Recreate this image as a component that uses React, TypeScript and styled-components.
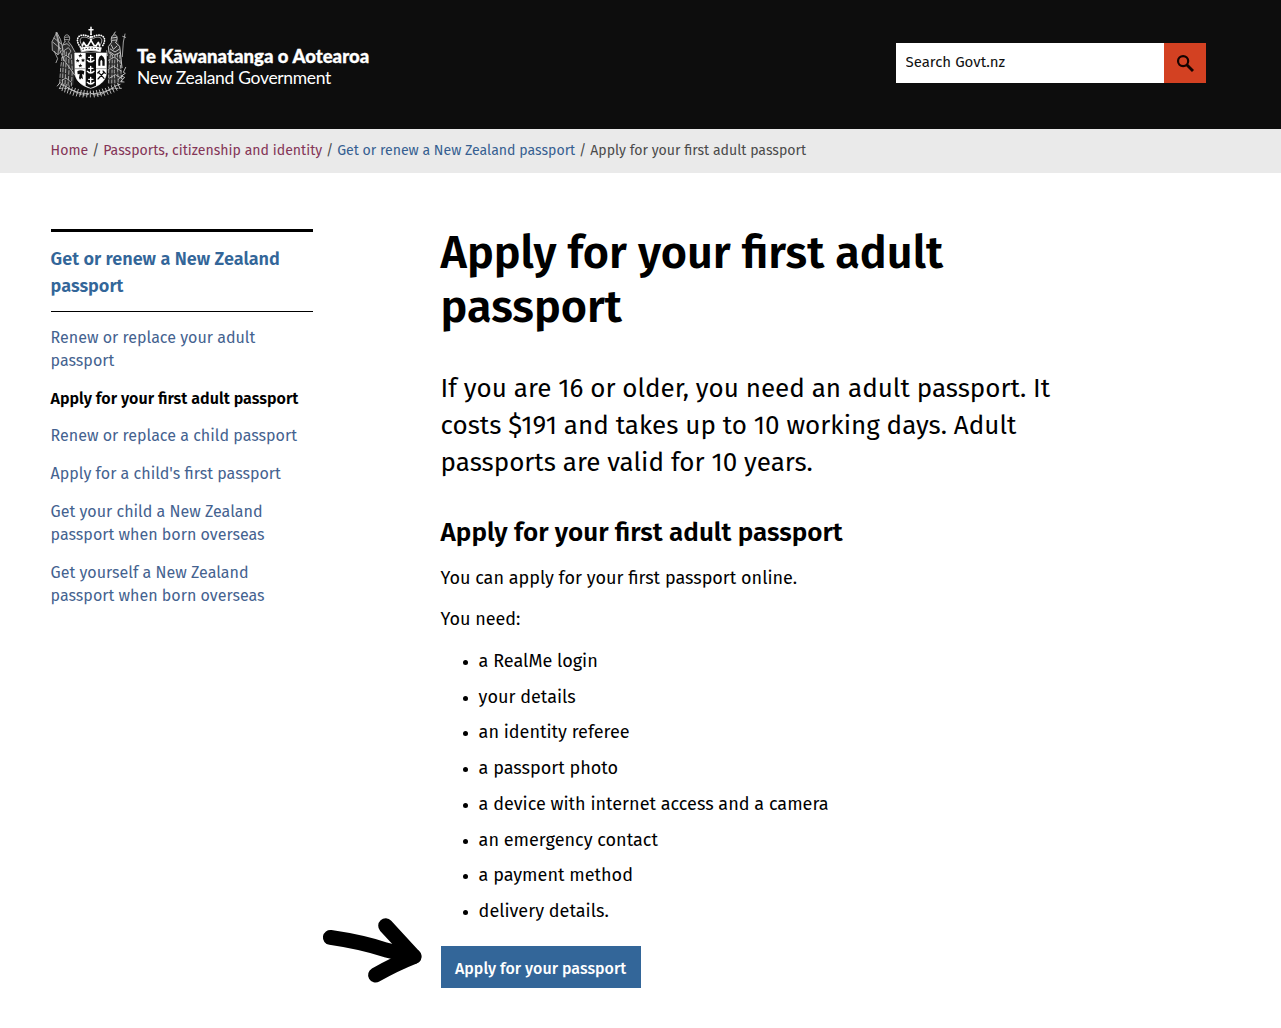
import React from "react";
import styled, { createGlobalStyle } from "styled-components";

const GlobalStyle = createGlobalStyle`
  *, *::before, *::after { box-sizing: border-box; }
  body {
    margin: 0;
    background: #fff;
    color: #000;
    font-family: "Fira Sans", "Noto Sans", "Open Sans", sans-serif;
  }
  a { text-decoration: none; color: inherit; }
  h1, h2, p, ul { margin: 0; padding: 0; }
`;

const Page = styled.div`
  position: relative;
  height: 1028px;
  overflow: hidden;
`;

const Header = styled.header`
  display: flex;
  justify-content: space-between;
  height: 129px;
  padding: 26px 75px 0 51px;
  background: #0d0d0d;
`;

const Brand = styled.a`
  display: flex;
  gap: 10px;
  color: #fff;
`;

const BrandText = styled.span`
  display: flex;
  flex-direction: column;
  padding-top: 20px;
  font-family: Lato, sans-serif;
  line-height: 21px;
  white-space: nowrap;
`;

const BrandName = styled.span<{ $strong?: boolean }>`
  font-size: ${(p) => (p.$strong ? "18.5px" : "17.5px")};
  font-weight: ${(p) => (p.$strong ? 900 : 400)};
  letter-spacing: ${(p) => (p.$strong ? "0.04px" : "-0.32px")};
  -webkit-text-stroke: ${(p) => (p.$strong ? "0.35px #fff" : "0")};
`;

const SearchForm = styled.form`
  display: flex;
  width: 310px;
  height: 40px;
  margin-top: 17px;
`;

const SearchInput = styled.input`
  flex: 1;
  min-width: 0;
  border: 0;
  padding: 0 9px 2px 9.5px;
  background: #fff;
  color: #111;
  font: 400 15px "Fira Sans", "Noto Sans", sans-serif;
  outline: none;
  &::placeholder { color: #111; opacity: 1; }
`;

const SearchButton = styled.button`
  display: flex;
  align-items: center;
  justify-content: center;
  width: 42px;
  border: 0;
  padding: 0;
  background: #d34122;
  color: #150300;
`;

const Breadcrumbs = styled.nav`
  display: flex;
  gap: 3.85px;
  height: 44px;
  padding: 12px 50.6px 0;
  background: #eaeaea;
  color: #4a4a4a;
  font-size: 14.1px;
  line-height: 20px;
  white-space: nowrap;
`;

const Crumb = styled.a<{ $color?: string }>`
  color: ${(p) => p.$color ?? "#4a4a4a"};
`;

const Columns = styled.div`
  display: flex;
  align-items: flex-start;
  gap: 128px;
  padding-left: 50.6px;
`;

const Sidebar = styled.aside`
  width: 262px;
  margin-top: 56px;
  border-top: 3px solid #000;
`;

const SidebarTitle = styled.a`
  display: block;
  height: 80px;
  padding-top: 14px;
  border-bottom: 1px solid #000;
  color: #336699;
  font-size: 18.08px;
  font-weight: 600;
  line-height: 27px;
  white-space: nowrap;
`;

const SidebarList = styled.ul`
  display: flex;
  flex-direction: column;
  gap: 14.8px;
  padding-top: 13.8px;
  list-style: none;
`;

const SidebarItem = styled.li<{ $current?: boolean }>`
  color: ${(p) => (p.$current ? "#000" : "#44628f")};
  font-size: 16.06px;
  font-weight: ${(p) => (p.$current ? 600 : 400)};
  line-height: 23px;
  white-space: nowrap;
`;

const Main = styled.main`
  width: 640px;
  padding-top: 53px;
  white-space: nowrap;
`;

const Title = styled.h1`
  font-size: 45px;
  font-weight: 600;
  line-height: 54px;
`;

const Lead = styled.p`
  padding-top: 36px;
  font-size: 26px;
  line-height: 37px;
`;

const Heading = styled.h2`
  padding-top: 36px;
  font-size: 26.05px;
  font-weight: 600;
  line-height: 32px;
`;

const Text = styled.p<{ $top: number }>`
  padding-top: ${(p) => p.$top}px;
  font-size: 18px;
  line-height: 27px;
`;

const Needs = styled.ul`
  display: flex;
  flex-direction: column;
  gap: 8.75px;
  padding: 15.35px 0 20.75px 22px;
  list-style: none;
`;

const Need = styled.li`
  display: flex;
  align-items: center;
  gap: 11px;
  font-size: 18.05px;
  line-height: 27px;
  &::before {
    content: "";
    width: 5px;
    height: 5px;
    margin-top: 2px;
    border-radius: 50%;
    background: #000;
  }
`;

const ApplyButton = styled.a`
  display: flex;
  align-items: center;
  justify-content: center;
  width: 200px;
  height: 42px;
  padding-top: 3.4px;
  background: #336699;
  color: #fff;
  font-size: 16px;
  font-weight: 500;
`;

const Pointer = styled.svg`
  position: absolute;
  left: 320px;
  top: 915px;
`;

const star = (x: number, y: number) =>
  Array.from({ length: 10 }, (_, i) => {
    const r = i % 2 ? 2.8 : 6.5;
    const a = (Math.PI * i) / 5 - Math.PI / 2;
    return `${(x + r * Math.cos(a)).toFixed(1)},${(y + r * Math.sin(a)).toFixed(1)}`;
  }).join(" ");

function CoatOfArms() {
  return (
    <svg width="76" height="74" viewBox="33 18 228 222" fill="none" stroke="#fff" strokeLinecap="round" strokeLinejoin="round" aria-hidden="true">
      {/* Left supporter with flag */}
      <path d="M37 66 L50 40 L61 60 L69 88 L54 103 L38 91 Z M70 66 L84 64 L98 78 L104 98 L104 160 L100 196 L60 196 L66 120 Z" fill="#2c2c2c" stroke="none" />
      <g stroke="#c4c4c4" strokeWidth="2.4">
        <path d="M50 38 L36 65 L37 91 L54 104 L69 88 L62 60 Z M50 38 L57 66 L54 104 M38 66 L62 86 M42 54 L64 72" />
        <path d="M48 38 L60 92 L72 120 L104 165" />
        <path d="M75 65 C70 50 75 43 83 45 C91 48 90 60 85 65 L94 76 L105 96 M75 65 C66 75 65 84 69 94 L85 83 L93 93 L86 104" />
        <path d="M69 94 L62 143 L59 190 M73 94 L69 148 L67 196 M79 96 L77 150 L75 198 M86 101 L87 150 L84 198 M94 104 L97 153 L94 198" strokeDasharray="11 6" />
        <path d="M76 52 L86 51 M75 59 L85 59 M69 75 L81 71 L89 78 M65 114 L78 106 L91 116 M66 181 L78 174 L93 186 M43 94 L53 116 L48 128" />
      </g>
      {/* Right supporter with taiaha */}
      <path d="M212 66 L216 46 L228 42 L234 58 L240 80 L244 110 L248 190 L206 192 L204 96 Z" fill="#2c2c2c" stroke="none" />
      <g stroke="#c4c4c4" strokeWidth="2.4">
        <path d="M215 66 C211 54 216 43 226 45 C235 49 231 62 227 68 M221 43 L226 36 M216 54 L230 52 M216 61 L229 60" strokeWidth="3" />
        <path d="M214 68 L205 80 L207 98 L217 106 M227 68 L239 79 L242 105 L246 143 M214 75 L220 88 L231 78 M211 87 L225 96 L237 88 M210 96 L224 105 L239 98" strokeWidth="3" />
        <path d="M211 105 L206 153 L206 190 M217 105 L216 158 L215 196 M225 105 L223 155 L225 196 M232 102 L233 154 L235 195 M239 106 L243 158 L245 184" strokeDasharray="9 6" />
        <path d="M255 42 L250 66 L247 110 M248 49 L257 52 M205 121 L223 111 L239 124 M204 149 L220 139 L244 153 M209 174 L226 164 L248 177 M202 107 L200 92" />
      </g>
      {/* Crown */}
      <g>
        <path d="M153 22 V38 M147 29 H159" strokeWidth="4.5" />
        <path d="M121 81 C99 53 122 34 153 53 C184 34 207 53 185 81" strokeWidth="5" strokeDasharray="1 6" />
        <path d="M127 77 C109 54 130 43 151 58 M179 77 C197 54 176 43 155 58" strokeWidth="2" />
        <path d="M153 42 V62" strokeWidth="6" strokeDasharray="1 7" />
        <path d="M127 78 L131 67 L138 78 L144 76 L153 61 L162 76 L168 78 L175 67 L179 78" strokeWidth="5" />
        <path d="M122 83 Q153 76 184 83 L181 95 Q153 88 125 95 Z" fill="#fff" strokeWidth="2" />
        <path d="M128 88 Q153 81 178 88" stroke="#0d0d0d" strokeWidth="3" strokeDasharray="4 5" strokeLinecap="butt" />
      </g>
      {/* Shield */}
      <path d="M105 99 H199 V158 C199 184 175 199 152 205 C129 199 105 184 105 158 Z" fill="#fff" strokeWidth="2" />
      <path d="M137 99 H168 V197 L152 204 L137 197 Z" fill="#0d0d0d" stroke="none" />
      <path d="M106 146 H136 M169 146 H198" stroke="#777" strokeWidth="2" />
      <g strokeWidth="4">
        {[0, 33, 66].map((y) => (
          <path
            key={y}
            d={`M152 ${106 + y} V${122 + y} M146 ${112 + y} H159 M142 ${121 + y} Q152 ${131 + y} 162 ${121 + y} M146 ${125 + y} H158`}
          />
        ))}
      </g>
      <g fill="#0d0d0d" stroke="none">
        {[[121, 107], [113, 122], [129, 121], [121, 137]].map(([x, y]) => (
          <polygon key={`${x}-${y}`} points={star(x, y)} />
        ))}
        <path d="M112 154 Q122 148 133 154 L131 164 L126 162 L129 178 L124 174 L120 179 L117 174 L119 162 L113 163 Z" />
        <path d="M175 137 V119 Q177 109 184 106 Q192 110 194 119 V137 H187 V123 L184 119 L181 123 V137 Z" />
      </g>
      <path d="M174 177 L193 156 M176 157 L192 175 M173 159 L179 153 M189 153 L196 160" stroke="#0d0d0d" strokeWidth="3.5" />
      {/* Scroll and fern leaves */}
      <g stroke="#d0d0d0" strokeWidth="2.6">
        <path d="M63 193 C86 199 95 220 145 221 M240 193 C216 199 207 220 155 221" />
        <path d="M60 205 Q90 202 112 220 Q143 231 151 217 Q160 231 191 220 Q212 203 244 205" strokeDasharray="7 5" />
        <path d="M60 188 L52 198 M66 190 L58 206 M72 192 L66 212 M79 194 L74 216 M88 198 L82 219 M97 203 L90 222 M106 205 L99 226 M115 208 L109 228 M124 211 L119 229 M133 211 L129 231 M142 213 L140 231 M151 213 V231 M160 213 L163 231 M169 211 L174 230 M178 210 L184 228 M187 207 L194 226 M196 205 L204 223 M205 201 L213 220 M214 198 L222 216 M223 194 L231 211 M233 190 L240 205" />
        <path d="M257 142 L250 157 L256 160 L244 168 L254 172 L242 185 L252 186 M235 178 L250 164" />
      </g>
    </svg>
  );
}

const visited = "#843557";
const link = "#365f91";

const needs = [
  "a RealMe login",
  "your details",
  "an identity referee",
  "a passport photo",
  "a device with internet access and a camera",
  "an emergency contact",
  "a payment method",
  "delivery details.",
];

export default function App() {
  return (
    <Page>
      <GlobalStyle />
      <Header>
        <Brand href="#">
          <CoatOfArms />
          <BrandText>
            <BrandName $strong>Te Kāwanatanga o Aotearoa</BrandName>
            <BrandName>New Zealand Government</BrandName>
          </BrandText>
        </Brand>
        <SearchForm>
          <SearchInput placeholder="Search Govt.nz" />
          <SearchButton type="button" aria-label="Search">
            <svg width="23" height="23" viewBox="0 0 24 24" fill="none" stroke="currentColor">
              <circle cx="9.5" cy="9.5" r="5.3" strokeWidth="2.3" />
              <path d="M13.6 13.6 L19.8 19.8" strokeWidth="3" />
            </svg>
          </SearchButton>
        </SearchForm>
      </Header>
      <Breadcrumbs>
        <Crumb href="#" $color={visited}>Home</Crumb>
        <span>/</span>
        <Crumb href="#" $color={visited}>Passports, citizenship and identity</Crumb>
        <span>/</span>
        <Crumb href="#" $color={link}>Get or renew a New Zealand passport</Crumb>
        <span>/</span>
        <Crumb as="span">Apply for your first adult passport</Crumb>
      </Breadcrumbs>
      <Columns>
        <Sidebar>
          <SidebarTitle href="#">
            Get or renew a New Zealand
            <br />
            passport
          </SidebarTitle>
          <SidebarList>
            <SidebarItem><a href="#">Renew or replace your adult<br />passport</a></SidebarItem>
            <SidebarItem $current>Apply for your first adult passport</SidebarItem>
            <SidebarItem><a href="#">Renew or replace a child passport</a></SidebarItem>
            <SidebarItem><a href="#">Apply for a child's first passport</a></SidebarItem>
            <SidebarItem><a href="#">Get your child a New Zealand<br />passport when born overseas</a></SidebarItem>
            <SidebarItem><a href="#">Get yourself a New Zealand<br />passport when born overseas</a></SidebarItem>
          </SidebarList>
        </Sidebar>
        <Main>
          <Title>Apply for your first adult<br />passport</Title>
          <Lead>
            If you are 16 or older, you need an adult passport. It
            <br />
            costs $191 and takes up to 10 working days. Adult
            <br />
            passports are valid for 10 years.
          </Lead>
          <Heading>Apply for your first adult passport</Heading>
          <Text $top={15.5}>You can apply for your first passport online.</Text>
          <Text $top={14}>You need:</Text>
          <Needs>
            {needs.map((n) => <Need key={n}>{n}</Need>)}
          </Needs>
          <ApplyButton href="#">Apply for your passport</ApplyButton>
        </Main>
      </Columns>
      <Pointer width="106" height="72" viewBox="320 915 106 72" fill="none" stroke="#000" strokeWidth="15" strokeLinecap="round" strokeLinejoin="round">
        <path d="M330.4 937.4 Q362 942 386 950 L414 956.5" />
        <path d="M385.7 925.8 L414 956.5 C400 962 388 968 375.6 975" />
      </Pointer>
    </Page>
  );
}
